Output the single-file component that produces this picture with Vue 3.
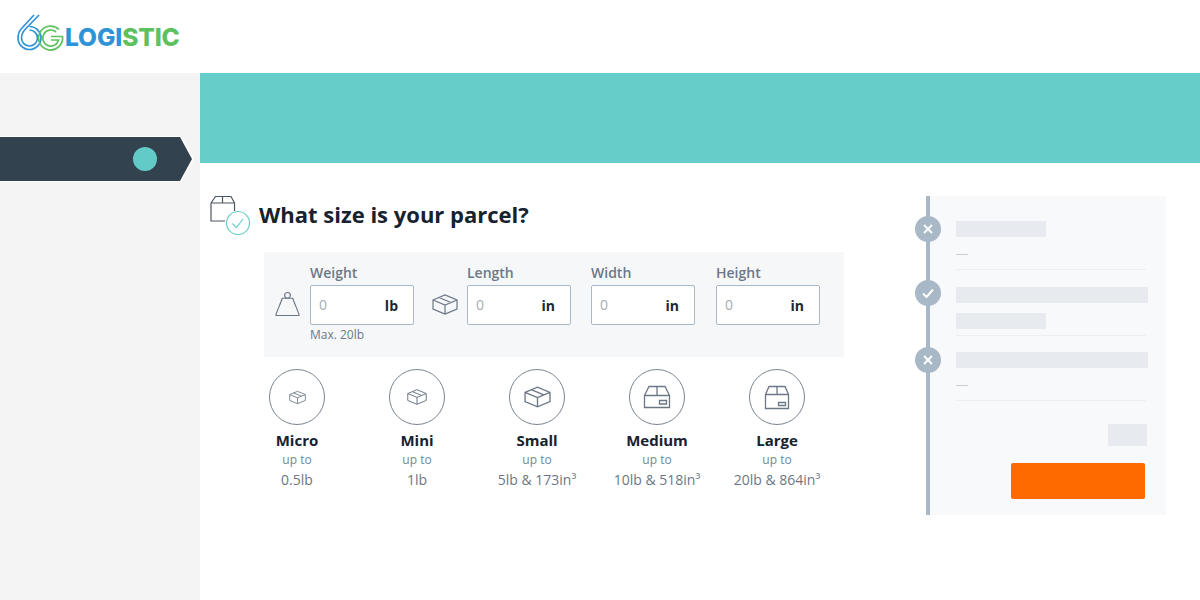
<script setup>
const boxIso = 'M1 7 13 2 25 7V16L13 21 1 16ZM1 7 13 12 25 7M13 12V21M7 4.5 19 9.5'
const boxMedium = 'M1.5 10.5H26.5V22.5H1.5ZM1.5 10.5 6 1.5H22L26.5 10.5M14 1.5V10.5M16.5 15.5H23.5V19H16.5Z'
const boxLarge = 'M1.5 9.5H24.5V23.5H1.5ZM1.5 9.5 5 1.5H21L24.5 9.5M13 1.5V9.5M14.5 17.5H21.5V20.5H14.5Z'

const fields = [
  { label: 'Weight', unit: 'lb', cls: 'f-weight' },
  { label: 'Length', unit: 'in', cls: 'f-length' },
  { label: 'Width', unit: 'in', cls: 'f-width' },
  { label: 'Height', unit: 'in', cls: 'f-height' }
]

const sizes = [
  { name: 'Micro', limit: '0.5lb', path: boxIso, vb: '0 0 26 23', w: 17, h: 15 },
  { name: 'Mini', limit: '1lb', path: boxIso, vb: '0 0 26 23', w: 20, h: 18 },
  { name: 'Small', limit: '5lb & 173in³', path: boxIso, vb: '0 0 26 23', w: 27, h: 24 },
  { name: 'Medium', limit: '10lb & 518in³', path: boxMedium, vb: '0 0 28 24', w: 28, h: 24 },
  { name: 'Large', limit: '20lb & 864in³', path: boxLarge, vb: '0 0 26 25', w: 26, h: 25 }
]
</script>

<template>
  <div class="page">
    <header class="top">
      <div class="logo">
        <svg class="logo-mark" width="47" height="38" viewBox="0 0 47 38" fill="none" aria-hidden="true">
          <g stroke="#2f93d8" stroke-width="1.7">
            <path d="M17 1 5 14C2 17 1 20 1 24A11.500 11.500 0 1 0 12.500 12.500"/>
            <path d="M22 1 8.500 15C6 17.500 4.500 20 4.500 24A8 8 0 1 0 12.500 16"/>
          </g>
          <g stroke="#5dc25e" stroke-width="1.7">
            <path d="M42 15.500A12 12 0 1 0 45.500 22.500H34"/>
            <path d="M39 18A8 8 0 1 0 41.500 26H34"/>
          </g>
        </svg>
        <span class="logo-text"><span class="blue">LOGI</span><span class="green">STIC</span></span>
      </div>
    </header>

    <div class="below">
      <aside class="side">
        <div class="tag-halo">
          <div class="tag"><span class="tag-dot"></span></div>
        </div>
      </aside>

      <main class="main">
        <div class="banner"></div>

        <div class="body">
          <section class="form-col">
            <div class="title-row">
              <svg class="title-icon" width="40" height="40" viewBox="0 0 40 40" fill="none" aria-hidden="true">
                <path d="M1 8 5.500 1.500H21L24.500 8M1 8H24.500V16M1 8V26H15M12.500 1.500V8" stroke="#4c5765" stroke-width="1.200"/>
                <circle cx="28" cy="28" r="11.500" fill="#fff" stroke="#66cdc9" stroke-width="1.200"/>
                <path d="M22.500 28.500 26.500 32.500 33 24" stroke="#66cdc9" stroke-width="1.200"/>
              </svg>
              <h1 class="title">What size is your parcel?</h1>
            </div>

            <div class="panel">
              <svg class="ico ico-weight" width="26" height="26" viewBox="0 0 26 26" fill="none" aria-hidden="true">
                <circle cx="13" cy="4" r="3" stroke="#6c7786" stroke-width="1.200"/>
                <path d="M7.500 7H18.500C20 12 23 18 25 24V25H1V24C3 18 6 12 7.500 7Z" stroke="#6c7786" stroke-width="1.200" stroke-linejoin="round"/>
              </svg>
              <template v-for="(f, i) in fields" :key="f.label">
                <svg v-if="i === 1" class="ico ico-box" width="26" height="23" viewBox="0 0 26 23" fill="none" aria-hidden="true">
                  <path :d="boxIso" stroke="#6c7786" stroke-width="1.200"/>
                </svg>
                <div class="field" :class="f.cls">
                  <label class="field-label">{{ f.label }}</label>
                  <div class="input">
                    <span class="zero">0</span>
                    <span class="unit">{{ f.unit }}</span>
                  </div>
                  <div v-if="i === 0" class="hint">Max. 20lb</div>
                </div>
              </template>
            </div>

            <div class="sizes">
              <div v-for="s in sizes" :key="s.name" class="size">
                <div class="circle">
                  <svg :width="s.w" :height="s.h" :viewBox="s.vb" fill="none" aria-hidden="true">
                    <path :d="s.path" stroke="#6c7786" stroke-width="1.300"/>
                  </svg>
                </div>
                <div class="size-name">{{ s.name }}</div>
                <div class="size-up">up to</div>
                <div class="size-limit">{{ s.limit }}</div>
              </div>
            </div>
          </section>

          <aside class="summary">
            <div class="step step-one">
              <span class="badge">
                <svg width="12" height="12" viewBox="0 0 12 12" fill="none"><path d="M2 2 10 10M10 2 2 10" stroke="#fff" stroke-width="2"/></svg>
              </span>
              <div class="bar bar-short"></div>
              <div class="dash"></div>
            </div>
            <div class="step step-two">
              <span class="badge badge-up">
                <svg width="14" height="12" viewBox="0 0 14 12" fill="none"><path d="M2 6.500 5.500 10 12 2.500" stroke="#fff" stroke-width="2"/></svg>
              </span>
              <div class="bar bar-long"></div>
              <div class="bar bar-short bar-gap"></div>
            </div>
            <div class="step step-three">
              <span class="badge">
                <svg width="12" height="12" viewBox="0 0 12 12" fill="none"><path d="M2 2 10 10M10 2 2 10" stroke="#fff" stroke-width="2"/></svg>
              </span>
              <div class="bar bar-long"></div>
              <div class="dash"></div>
            </div>
            <div class="price"></div>
            <div class="cta"></div>
          </aside>
        </div>
      </main>
    </div>
  </div>
</template>

<style>
html, body { background: #fff; }
</style>

<style scoped>
.page {
  width: 1200px; height: 600px; overflow: hidden; background: #fff;
  font-family: "Open Sans", "Liberation Sans", sans-serif;
}
.top { height: 73px; display: flex; align-items: flex-start; padding: 14px 0 0 17px; box-sizing: border-box; }
.logo { display: flex; align-items: flex-start; }
.logo-mark { display: block; flex: none; }
.logo-text {
  font-family: Inter, "Liberation Sans", sans-serif; font-weight: 800; font-size: 24.500px;
  line-height: 24px; letter-spacing: -0.100px; margin: 11px 0 0 1px;
}
.blue { color: #2f93d8; }
.green { color: #5dc25e; }

.below { display: flex; height: 527px; }
.side { width: 200px; flex: none; padding-top: 63px; box-sizing: border-box; background: #f4f4f4; }
.tag-halo {
  width: 194px; height: 46px; background: #fff; position: relative; z-index: 1;
  clip-path: polygon(0 0, 181px 0, 194px 50%, 181px 100%, 0 100%);
  padding-top: 1px; box-sizing: border-box;
}
.tag {
  width: 192px; height: 44px; background: #33424f; display: flex; align-items: center;
  clip-path: polygon(0 0, 180px 0, 192px 50%, 180px 100%, 0 100%);
}
.tag-dot { width: 24px; height: 24px; border-radius: 50%; background: #62cbc7; margin-left: 133px; }

.main { width: 1000px; flex: none; }
.banner { height: 90px; background: #66cdc9; }
.body { display: flex; padding-top: 32px; }
.form-col { width: 726px; flex: none; }

.title-row { display: flex; align-items: center; height: 40px; padding-left: 10px; }
.title-icon { flex: none; }
.title { margin: 0 0 2px 9px; font-size: 22px; font-weight: 700; color: #17222f; line-height: 30px; }

.panel {
  display: flex; align-items: flex-start; width: 580px; height: 105px; box-sizing: border-box;
  margin: 17px 0 0 64px; padding: 12px 0 0 11px; background: #f6f7f9;
}
.ico { flex: none; }
.ico-weight { margin: 27px 10px 0 0; width: 25px; }
.ico-box { margin: 29px 9px 0 18px; }
.field { width: 104px; flex: none; }
.f-width { margin-left: 20px; }
.f-height { margin-left: 21px; }
.field-label { display: block; height: 21px; font-size: 14px; font-weight: 600; line-height: 18px; color: #6c7786; }
.input {
  height: 40px; box-sizing: border-box; background: #fff; border: 1px solid #a9b8c6; border-radius: 2px;
  display: flex; align-items: center; justify-content: space-between; padding: 0 15px 0 8px;
}
.zero { font-size: 14px; color: #a3adb8; margin-top: -2px; }
.unit { font-size: 14px; font-weight: 700; color: #1c2733; }
.hint { margin-top: 1px; font-size: 12px; line-height: 17px; color: #6c7786; }

.sizes { display: grid; grid-template-columns: repeat(5, 120px); margin: 12px 0 0 37px; }
.size { display: flex; flex-direction: column; align-items: center; }
.circle {
  width: 56px; height: 56px; box-sizing: border-box; border: 1px solid #7a8591; border-radius: 50%;
  display: flex; align-items: center; justify-content: center;
}
.size-name { margin-top: 5px; font-size: 15px; font-weight: 700; line-height: 20px; color: #17222f; }
.size-up { font-size: 12px; line-height: 18px; margin-top: 1px; color: #7a8591; }
.size-limit { font-size: 14px; line-height: 20px; margin-top: 1px; color: #6c7786; }

.summary {
  width: 240px; height: 319px; flex: none; box-sizing: border-box; margin-top: 1px;
  border-left: 4px solid #a9b8c6; background: #f8f9fb; padding: 25px 20px 0 26px;
}
.step { position: relative; border-bottom: 1px solid #eceef1; }
.step-one { height: 48px; }
.step-two { height: 48px; margin-top: 17px; }
.step-three { height: 48px; margin-top: 16px; }
.badge {
  position: absolute; left: -41px; top: -5px; width: 26px; height: 26px; border-radius: 50%;
  background: #a9b8c6; display: flex; align-items: center; justify-content: center;
}
.badge-up { top: -7px; }
.bar { height: 16px; background: #e7eaee; }
.bar-short { width: 90px; }
.bar-long { width: 192px; }
.bar-gap { margin-top: 10px; }
.dash { width: 12px; height: 1px; margin-top: 17px; background: #c9ced4; }
.price { width: 39px; height: 22px; margin: 23px 0 0 152px; background: #e7eaee; }
.cta { width: 134px; height: 36px; margin: 17px 0 0 55px; background: #ff6a00; border-radius: 2px; }
</style>
